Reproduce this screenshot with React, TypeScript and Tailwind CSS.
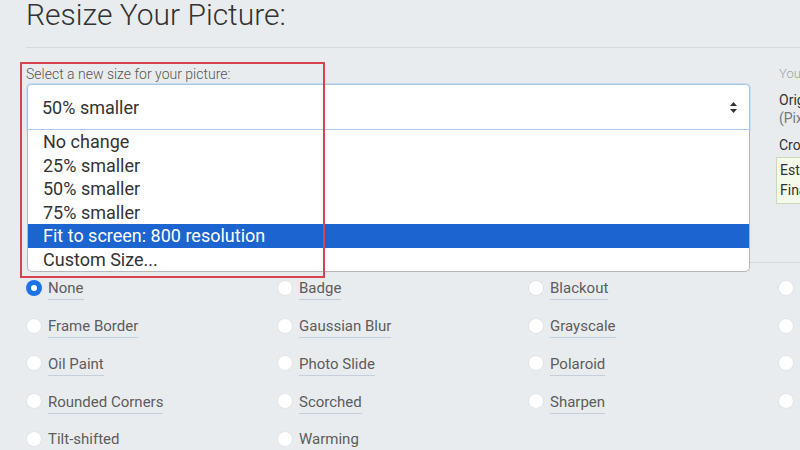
import React from 'react';

const options = ['No change', '25% smaller', '50% smaller', '75% smaller', 'Fit to screen: 800 resolution', 'Custom Size...'];

const effects = [
  ['None', 'Badge', 'Blackout', 'Sepia'],
  ['Frame Border', 'Gaussian Blur', 'Grayscale', 'Sketch'],
  ['Oil Paint', 'Photo Slide', 'Polaroid', 'Vignette'],
  ['Rounded Corners', 'Scorched', 'Sharpen', 'Vintage'],
  ['Tilt-shifted', 'Warming', '', ''],
];

function Radio({ label, checked }: { label: string; checked?: boolean }) {
  if (!label) return <div />;
  return (
    <div className="flex items-center h-full">
      {checked ? (
        <span className="w-[16px] h-[16px] rounded-full bg-[#1a73e8] flex items-center justify-center shrink-0">
          <span className="w-[6px] h-[6px] rounded-full bg-white" />
        </span>
      ) : (
        <span className="w-[16px] h-[16px] rounded-full bg-white border border-[#e2e5e8] shrink-0" />
      )}
      <span className="ml-[6px] mt-[4px] pb-[2px] leading-[18px] text-[15px] text-[#5c5c5c] border-b border-[#c5cedb] whitespace-nowrap">
        {label}
      </span>
    </div>
  );
}

export default function App() {
  return (
    <div className="relative w-[800px] h-[450px] overflow-hidden bg-[#e9ecef] font-['Roboto',sans-serif]">
      <div className="w-[1100px] pl-[26px]">
        <h1 className="text-[30px] leading-[30px] font-light text-[#333]">Resize Your Picture:</h1>
        <div className="mt-[17px] border-t border-[#d4d9de]" />

        <div className="flex mt-[16px]">
          <div className="w-[724px]">
            <div className="text-[14px] leading-[20px] font-light text-[#555]">Select a new size for your picture:</div>
            <div className="ml-px h-[46px] bg-white border border-[#a9c8ea] rounded-t-[4px] shadow-[0_0_0_1px_rgba(120,170,225,0.25)] flex items-center justify-between pl-[14px] pr-[12px]">
              <span className="text-[18px] text-[#333]">50% smaller</span>
              <svg width="7" height="11" viewBox="0 0 7 11">
                <path d="M3.5 0 L7 4 L0 4 Z M0 7 L7 7 L3.5 11 Z" fill="#333" />
              </svg>
            </div>
          </div>

          <div className="ml-[26px] pl-[3px]">
            <div className="text-[13px] leading-[20px] text-[#a0a0a0] font-light">Your picture details</div>
            <div className="mt-[7px] text-[14px] leading-[18px] text-[#333]">Original size: 1920 x 1080</div>
            <div className="text-[14px] leading-[18px] text-[#777]">(Pixels)</div>
            <div className="mt-[9px] text-[14px] leading-[18px] text-[#333]">Crop: none</div>
            <div className="-ml-[3px] mt-[3px] w-[240px] bg-[#f5fbea] border border-[#cdd8bb] pt-[2px] pb-[3px] px-[3px] text-[14px] leading-[20px] text-[#333]">
              <div>Estimated size: 960 x 540</div>
              <div>Final size: 960 x 540</div>
            </div>
          </div>
        </div>

        <div className="mt-[58px] border-t border-[#d4d9de]" />

        <div className="mt-[6px] grid grid-cols-[251px_251px_250px_251px] auto-rows-[37.75px]">
          {effects.flat().map((e, i) => (
            <Radio key={i} label={e} checked={i === 0} />
          ))}
        </div>
      </div>

      {/* open dropdown menu */}
      <div className="absolute left-[27px] top-[130px] w-[723px] bg-white border border-t-0 border-[#b4b8bd] rounded-b-[5px] overflow-hidden">
        {options.map((o, i) => (
          <div
            key={o}
            className={
              i === 4
                ? 'h-[23.5px] leading-[23.5px] pl-[15px] text-[18px] bg-[#1c64cf] text-white'
                : 'h-[23.5px] leading-[23.5px] pl-[15px] text-[18px] text-[#333]'
            }
          >
            {o}
          </div>
        ))}
      </div>

      {/* annotation box */}
      <div className="absolute left-[20px] top-[62px] w-[305px] h-[216px] border-2 border-[#d6434f]" />
    </div>
  );
}
